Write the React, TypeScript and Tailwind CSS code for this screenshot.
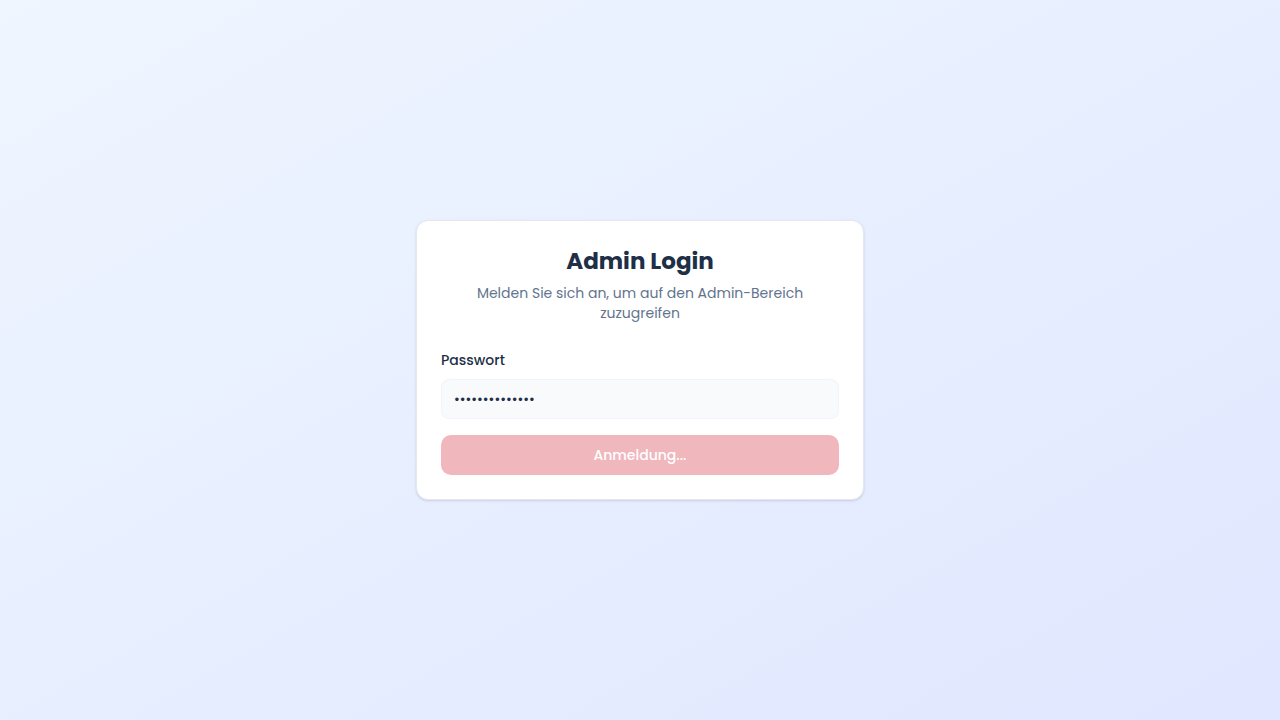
export default function App() {
  return (
    <section
      className="min-h-screen flex items-center justify-center bg-gradient-to-br from-blue-50 to-indigo-100"
      style={{ fontFamily: 'Poppins, "Open Sans", "Noto Sans", Inter, sans-serif' }}
    >
      <form className="w-full max-w-md bg-white border border-slate-200 rounded-xl shadow-sm p-6">
        <div className="text-center">
          <h1 className="text-[23px] leading-8 font-bold text-[#1e2f47]">Admin Login</h1>
          <p className="mt-1.5 text-sm leading-5 text-slate-500 max-w-[340px] mx-auto">
            Melden Sie sich an, um auf den Admin-Bereich zuzugreifen
          </p>
        </div>

        <div className="mt-[27px] flex flex-col">
          <label htmlFor="password" className="text-sm leading-5 font-medium text-[#1e2f47] mb-[9px]">
            Passwort
          </label>
          <input
            id="password"
            type="password"
            defaultValue="adminpasswort1"
            className="h-10 px-3 rounded-lg bg-slate-50 border border-slate-100 text-sm text-[#1e2f47] outline-0"
          />
        </div>

        <button
          type="submit"
          disabled
          className="mt-4 w-full h-10 rounded-[10px] bg-[#f0b7bd] text-white text-sm font-medium"
        >
          Anmeldung...
        </button>
      </form>
    </section>
  )
}
